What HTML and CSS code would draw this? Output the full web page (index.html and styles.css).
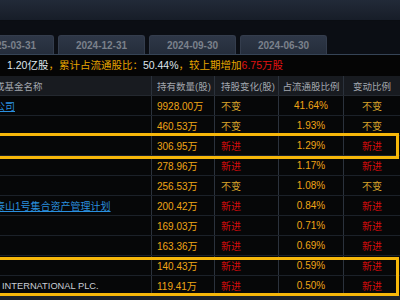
FILE: index.html
```html
<!DOCTYPE html>
<html lang="zh-CN">
<head>
<meta charset="utf-8">
<title>十大流通股东</title>
<link rel="stylesheet" href="styles.css">
</head>
<body>
<div class="screen">
  <div class="topbar"></div>
  <div class="tabbar">
    <div class="tab tab-first">2025-03-31</div>
    <div class="tab">2024-12-31</div>
    <div class="tab">2024-09-30</div>
    <div class="tab">2024-06-30</div>
  </div>
  <div class="summary"><span class="s-white">1.20亿股</span><span class="s-gold">，累计占流通股比：</span><span class="s-white">50.44%</span><span class="s-gold">，较上期增加</span><span class="s-red">6.75万股</span></div>
  <div class="table">
    <div class="row head">
      <div class="cell name"><span class="cut">或基金名称</span></div>
      <div class="cell c2">持有数量(股)</div>
      <div class="cell c3">持股变化(股)</div>
      <div class="cell c4">占流通股比例</div>
      <div class="cell c5">变动比例</div>
    </div>
    <div class="row">
      <div class="cell name"><a class="link cut">公司</a></div>
      <div class="cell c2 num">9928.00万</div>
      <div class="cell c3 same">不变</div>
      <div class="cell c4 num">41.64%</div>
      <div class="cell c5 same">不变</div>
    </div>
    <div class="row">
      <div class="cell name"></div>
      <div class="cell c2 num">460.53万</div>
      <div class="cell c3 same">不变</div>
      <div class="cell c4 num">1.93%</div>
      <div class="cell c5 same">不变</div>
    </div>
    <div class="row">
      <div class="cell name"></div>
      <div class="cell c2 num">306.95万</div>
      <div class="cell c3 new">新进</div>
      <div class="cell c4 num">1.29%</div>
      <div class="cell c5 new">新进</div>
    </div>
    <div class="row">
      <div class="cell name"></div>
      <div class="cell c2 num">278.96万</div>
      <div class="cell c3 new">新进</div>
      <div class="cell c4 num">1.17%</div>
      <div class="cell c5 new">新进</div>
    </div>
    <div class="row">
      <div class="cell name"></div>
      <div class="cell c2 num">256.53万</div>
      <div class="cell c3 same">不变</div>
      <div class="cell c4 num">1.08%</div>
      <div class="cell c5 same">不变</div>
    </div>
    <div class="row">
      <div class="cell name"><a class="link cut">泰山1号集合资产管理计划</a></div>
      <div class="cell c2 num">200.42万</div>
      <div class="cell c3 new">新进</div>
      <div class="cell c4 num">0.84%</div>
      <div class="cell c5 new">新进</div>
    </div>
    <div class="row">
      <div class="cell name"></div>
      <div class="cell c2 num">169.03万</div>
      <div class="cell c3 new">新进</div>
      <div class="cell c4 num">0.71%</div>
      <div class="cell c5 new">新进</div>
    </div>
    <div class="row">
      <div class="cell name"></div>
      <div class="cell c2 num">163.36万</div>
      <div class="cell c3 new">新进</div>
      <div class="cell c4 num">0.69%</div>
      <div class="cell c5 new">新进</div>
    </div>
    <div class="row">
      <div class="cell name"></div>
      <div class="cell c2 num">140.43万</div>
      <div class="cell c3 new">新进</div>
      <div class="cell c4 num">0.59%</div>
      <div class="cell c5 new">新进</div>
    </div>
    <div class="row">
      <div class="cell name"><span class="plain">INTERNATIONAL PLC.</span></div>
      <div class="cell c2 num">119.41万</div>
      <div class="cell c3 new">新进</div>
      <div class="cell c4 num">0.50%</div>
      <div class="cell c5 new">新进</div>
    </div>
    <div class="mark mark-one"></div>
    <div class="mark mark-two"></div>
  </div>
  <div class="footer"></div>
</div>
</body>
</html>
```
FILE: styles.css
```css
* {
  box-sizing: border-box;
  margin: 0;
  padding: 0;
}

html,
body {
  width: 400px;
  height: 300px;
  overflow: hidden;
  background: #06070a;
}

body {
  font-family: "Liberation Sans", "Noto Sans CJK SC", sans-serif;
  font-size: 10px;
}

.screen {
  width: 400px;
  height: 300px;
  display: flex;
  flex-direction: column;
}

.topbar {
  height: 21px;
  flex: none;
  background: linear-gradient(#222a38, #171d28);
  border-bottom: 1px solid #0a0d12;
}

.tabbar {
  height: 34px;
  flex: none;
  display: flex;
  align-items: flex-end;
  gap: 4px;
  background: #0b0e14;
  border-bottom: 1px solid #364456;
}

.tab {
  width: 87px;
  height: 19px;
  flex: none;
  display: flex;
  align-items: center;
  justify-content: center;
  background: linear-gradient(#2e3747, #252d3b);
  border: 1px solid #343d4d;
  border-bottom: none;
  border-radius: 3px 3px 0 0;
  color: #7b818b;
  font-weight: bold;
  font-size: 10px;
}

.tab-first {
  margin-left: -33px;
}

.summary {
  height: 21px;
  flex: none;
  line-height: 21px;
  padding-left: 7px;
  background: #050505;
  font-size: 10.5px;
  white-space: nowrap;
}

.s-white {
  color: #dfe5ee;
}

.s-gold {
  color: #e6a400;
}

.s-red {
  color: #e01212;
}

.table {
  position: relative;
  flex: none;
}

.row {
  display: grid;
  grid-template-columns: 151px 63px 64px 65px 57px;
  height: 20px;
  background: #060708;
  border-bottom: 1px solid #1b2129;
}

.row.head {
  background: #181b20;
  border-bottom: 1px solid #23282f;
  color: #a3a7ae;
  font-size: 9.5px;
}

.cell {
  display: flex;
  align-items: center;
  white-space: nowrap;
  overflow: hidden;
  border-left: 1px solid #2b323c;
}

.cell.name {
  border-left: none;
}

.c2 {
  padding-left: 5px;
}

.c3 {
  padding-left: 6px;
}

.c4,
.c5 {
  justify-content: center;
}

.cut {
  margin-left: -5px;
}

.link {
  color: #2a8fde;
  text-decoration: underline;
}

.plain {
  padding-left: 2px;
  color: #c9ced6;
  font-size: 9.3px;
}

.num {
  color: #eea516;
}

.same {
  color: #d6a22a;
}

.new {
  color: #d50c0c;
}

.mark {
  position: absolute;
  left: -10px;
  width: 409px;
  border: 3px solid #f6b70a;
  pointer-events: none;
}

.mark-one {
  top: 57px;
  height: 26px;
}

.mark-two {
  top: 181px;
  height: 39px;
}

.footer {
  flex: 1;
  background: #1b212b;
}
```
